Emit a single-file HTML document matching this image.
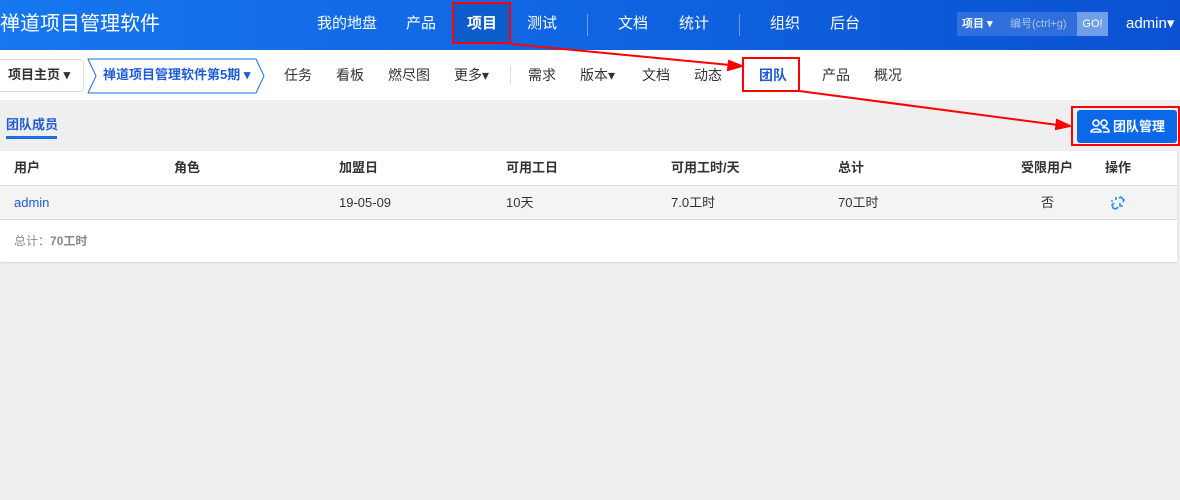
<!DOCTYPE html>
<html><head><meta charset="utf-8"><style>
*{margin:0;padding:0;box-sizing:border-box}
body{width:1180px;height:500px;background:#efefef;font-family:"Liberation Sans","Noto Sans CJK SC",sans-serif;font-size:13px;color:#333;position:relative;overflow:hidden}
div,span{line-height:1.2}
.hd{position:absolute;left:0;top:0;width:1180px;height:50px;background:linear-gradient(90deg,#1677ef,#0a52d2)}
.hd .t{position:absolute;left:0;top:12px;color:#fff;font-size:20px;line-height:24px}
.hd .n{position:absolute;top:14px;color:#fff;font-size:15px;line-height:20px}
.sep{position:absolute;top:14px;width:1px;height:22px;background:rgba(255,255,255,.4)}
.sb{position:absolute;left:0;top:50px;width:1180px;height:50px;background:#fff}
.sb span{position:absolute;top:16px;font-size:14px;line-height:18px;color:#333}
.box{position:absolute;border:2px solid #f00}
.card{position:absolute;left:0;top:151px;width:1177px;height:111px;background:#fff;box-shadow:0 1px 2px rgba(0,0,0,.1);border-radius:2px}
.card span{position:absolute;font-size:13px;line-height:16px}
</style></head><body>
<div class="hd">
<div class="t">禅道项目管理软件</div>
<div class="n" style="left:317px">我的地盘</div>
<div class="n" style="left:406px">产品</div>
<div style="position:absolute;left:454px;top:4px;width:56px;height:40px;background:#0d5ccc"></div>
<div class="n" style="left:467px;font-weight:bold">项目</div>
<div class="n" style="left:527px">测试</div>
<div class="sep" style="left:587px"></div>
<div class="n" style="left:618px">文档</div>
<div class="n" style="left:679px">统计</div>
<div class="sep" style="left:739px"></div>
<div class="n" style="left:770px">组织</div>
<div class="n" style="left:830px">后台</div>
<div style="position:absolute;left:957px;top:12px;width:151px;height:24px;background:rgba(255,255,255,.15)"></div>
<div style="position:absolute;left:962px;top:17px;color:#fff;font-size:11px;font-weight:bold;line-height:14px">项目 ▾</div>
<div style="position:absolute;left:1010px;top:17px;color:#aac4ee;font-size:11px;line-height:14px">编号(ctrl+g)</div>
<div style="position:absolute;left:1077px;top:12px;width:31px;height:24px;background:#6f9fe9;color:#fff;font-size:11px;line-height:24px;text-align:center">GO!</div>
<div style="position:absolute;left:1126px;top:15px;color:#fff;font-size:15px;line-height:18px">admin▾</div>
</div>
<div class="sb">
<div style="position:absolute;left:0;top:9px;width:84px;height:33px;border:1px solid #ddd;border-left:none;border-radius:0 4px 4px 0"></div>
<span style="left:8px;font-size:13px;font-weight:bold">项目主页 ▾</span>
<svg style="position:absolute;left:86px;top:8px" width="182" height="36"><path d="M2 1H170L178 18L170 35H2L10 18Z" fill="none" stroke="#1b6ee8"/></svg>
<span style="left:103px;font-size:13px;font-weight:bold;color:#1f5bd6">禅道项目管理软件第5期 ▾</span>
<span style="left:284px">任务</span><span style="left:336px">看板</span><span style="left:388px">燃尽图</span><span style="left:454px">更多▾</span>
<div style="position:absolute;left:510px;top:16px;width:1px;height:18px;background:#ddd"></div>
<span style="left:528px">需求</span><span style="left:580px">版本▾</span><span style="left:642px">文档</span><span style="left:694px">动态</span>
<span style="left:759px;color:#1f5bd6;font-weight:bold">团队</span><span style="left:822px">产品</span><span style="left:874px">概况</span>
</div>
<div style="position:absolute;left:6px;top:117px;color:#1f5bd6;font-weight:bold;font-size:13px;line-height:16px">团队成员</div>
<div style="position:absolute;left:6px;top:136px;width:51px;height:3px;background:#1a6fe8"></div>
<div style="position:absolute;left:1077px;top:110px;width:100px;height:33px;background:#0b68e8;border-radius:3px;color:#fff;font-size:13px;font-weight:bold;line-height:33px;padding-left:36px">团队管理</div>
<svg style="position:absolute;left:1090px;top:118px" width="20" height="16" fill="none" stroke="#fff" stroke-width="1.6"><circle cx="6" cy="5" r="3"/><circle cx="14" cy="5" r="3"/><path d="M1 14c0-4 10-4 10 0zM12 10c3-1 7 0 7 4h-6"/></svg>
<div class="card">
<div style="position:absolute;left:0;top:34px;width:1177px;height:35px;background:#f4f4f4;border-top:1px solid #ddd;border-bottom:1px solid #ddd"></div>
<span style="left:14px;top:9px;font-weight:bold">用户</span><span style="left:174px;top:9px;font-weight:bold">角色</span><span style="left:339px;top:9px;font-weight:bold">加盟日</span><span style="left:506px;top:9px;font-weight:bold">可用工日</span><span style="left:671px;top:9px;font-weight:bold">可用工时/天</span><span style="left:838px;top:9px;font-weight:bold">总计</span><span style="left:1021px;top:9px;font-weight:bold">受限用户</span><span style="left:1105px;top:9px;font-weight:bold">操作</span>
<span style="left:14px;top:44px;color:#1f5bd6">admin</span><span style="left:339px;top:44px">19-05-09</span><span style="left:506px;top:44px">10天</span><span style="left:671px;top:44px">7.0工时</span><span style="left:838px;top:44px">70工时</span><span style="left:1041px;top:44px">否</span>
<svg style="position:absolute;left:1110px;top:44px" width="16" height="16" fill="none" stroke="#2a8ef0" stroke-width="1.6"><path d="M9 3l2-1 3 3-1 2M4 8l-2 2 1 3 3 1 2-2M10 8v3h3M6 5V2M3 6H1"/></svg>
<span style="left:14px;top:82px;color:#888;font-size:12px">总计：<b>70工时</b></span>
</div>
<div class="box" style="left:452px;top:2px;width:59px;height:42px"></div>
<div class="box" style="left:742px;top:57px;width:58px;height:35px"></div>
<div class="box" style="left:1071px;top:106px;width:109px;height:40px"></div>
<svg style="position:absolute;left:0;top:0" width="1180" height="500"><g stroke="#f00" stroke-width="2" fill="#f00"><line x1="511" y1="44" x2="730" y2="65"/><path d="M742 66l-13-5 -1 9z"/><line x1="799" y1="91" x2="1058" y2="125"/><path d="M1070 126l-13-6-1 9z"/></g></svg>
</body></html>
